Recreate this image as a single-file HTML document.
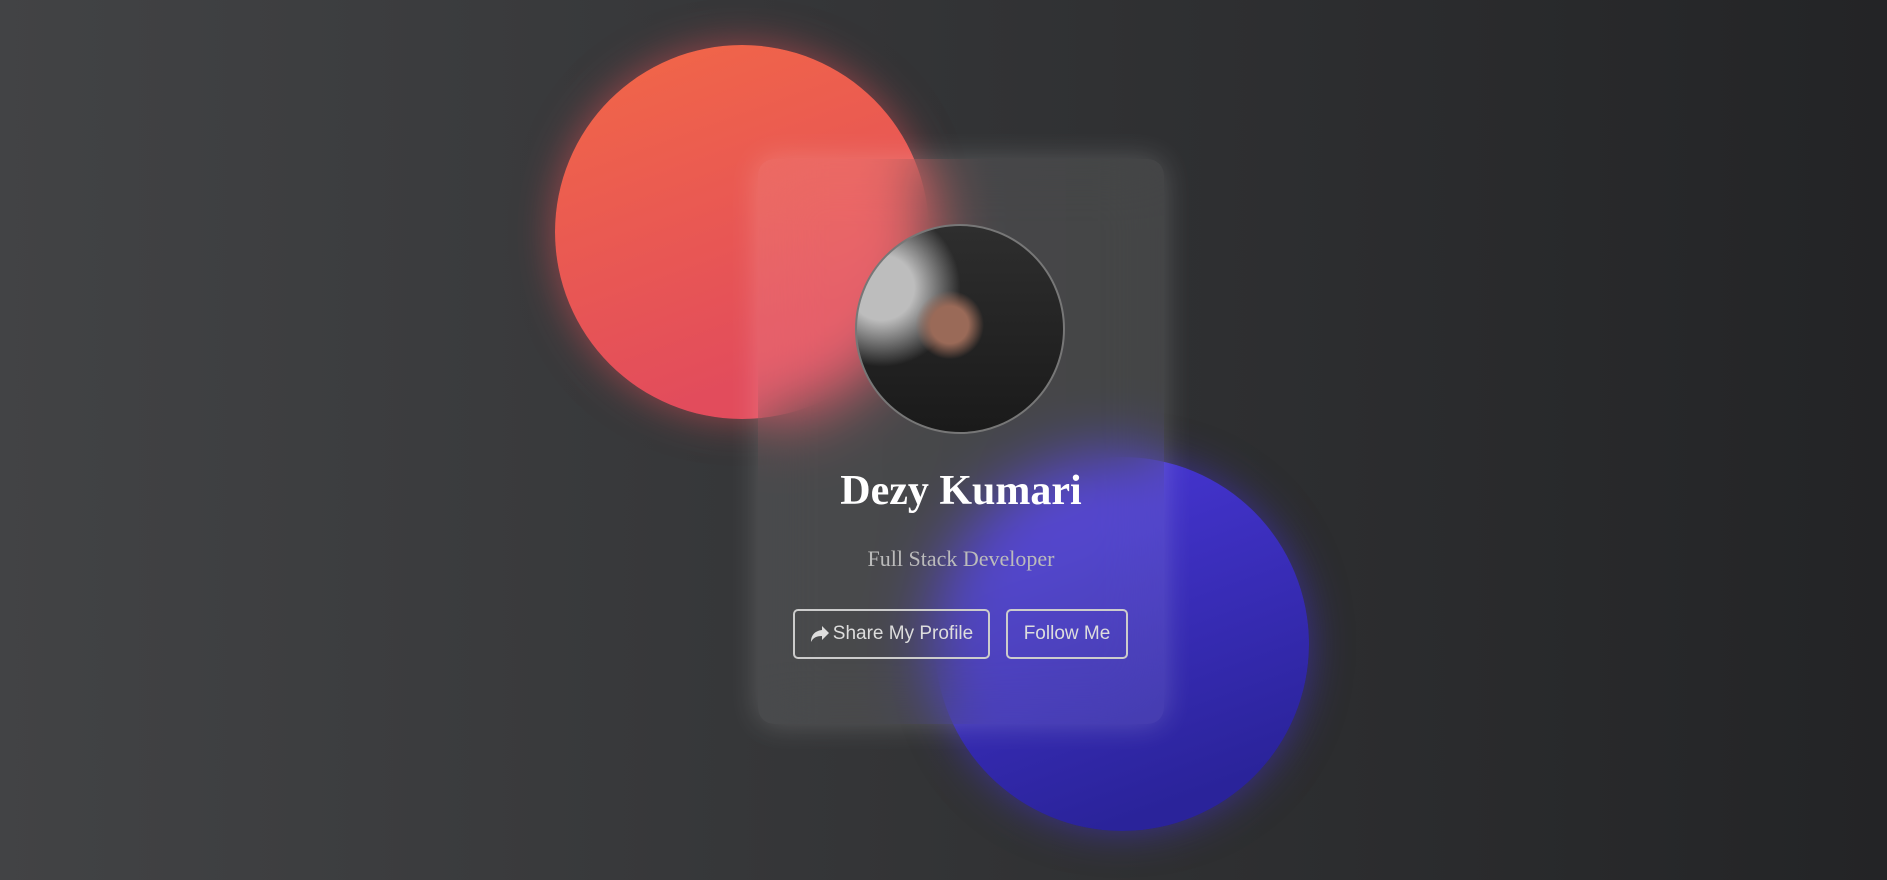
<!DOCTYPE html>
<html><head><meta charset="utf-8"><style>
*{margin:0;padding:0;box-sizing:border-box}
html,body{width:1887px;height:880px;overflow:hidden}
body{background:linear-gradient(to right,#424345,#232426);position:relative;font-family:"Liberation Serif",serif}
.c{position:absolute;border-radius:50%}
.red{left:555px;top:45px;width:374px;height:374px;background:linear-gradient(160deg,#f26847,#e24c5c 80%);box-shadow:0 0 40px rgba(240,80,90,.55)}
.blue{left:935px;top:457px;width:374px;height:374px;background:linear-gradient(160deg,#4a38da,#2a239a 85%);box-shadow:0 0 40px rgba(70,50,220,.55)}
.card{position:absolute;left:758px;top:159px;width:406px;height:565px;border-radius:16px;background:rgba(255,255,255,.1);backdrop-filter:blur(30px);-webkit-backdrop-filter:blur(30px);box-shadow:0 0 30px rgba(255,255,255,.2)}
.av{position:absolute;left:97px;top:65px;width:210px;height:210px;border-radius:50%;border:2px solid #777;overflow:hidden;background:radial-gradient(circle at 45% 48%,#9a6a58 0 12%,transparent 22%),radial-gradient(circle at 12% 30%,#bdbdbd 0 14%,transparent 34%),linear-gradient(180deg,#2e2e2e 0%,#222 60%,#1a1a1a)}
h1{position:absolute;top:308px;width:100%;text-align:center;color:#fff;font-size:42px;font-weight:bold}
p{position:absolute;top:387px;width:100%;text-align:center;color:#bbb;font-size:22px}
.b{position:absolute;top:450px;height:50px;border:2px solid #ccc;border-radius:5px;color:#ddd;font-family:"Liberation Sans",sans-serif;font-size:19px;display:flex;align-items:center;justify-content:center;gap:3px}
</style></head><body>
<div class="c red"></div><div class="c blue"></div>
<div class="card">
<div class="av"></div>
<h1>Dezy Kumari</h1>
<p>Full Stack Developer</p>
<div class="b" style="left:35px;width:197px"><svg width="20" height="18" viewBox="0 0 20 18"><path d="M12 1l7 7-7 7v-4c-6 0-9 2-11 6 0-6 3-11 11-12z" fill="#ddd"/></svg>Share My Profile</div>
<div class="b" style="left:248px;width:122px">Follow Me</div>
</div>
</body></html>
